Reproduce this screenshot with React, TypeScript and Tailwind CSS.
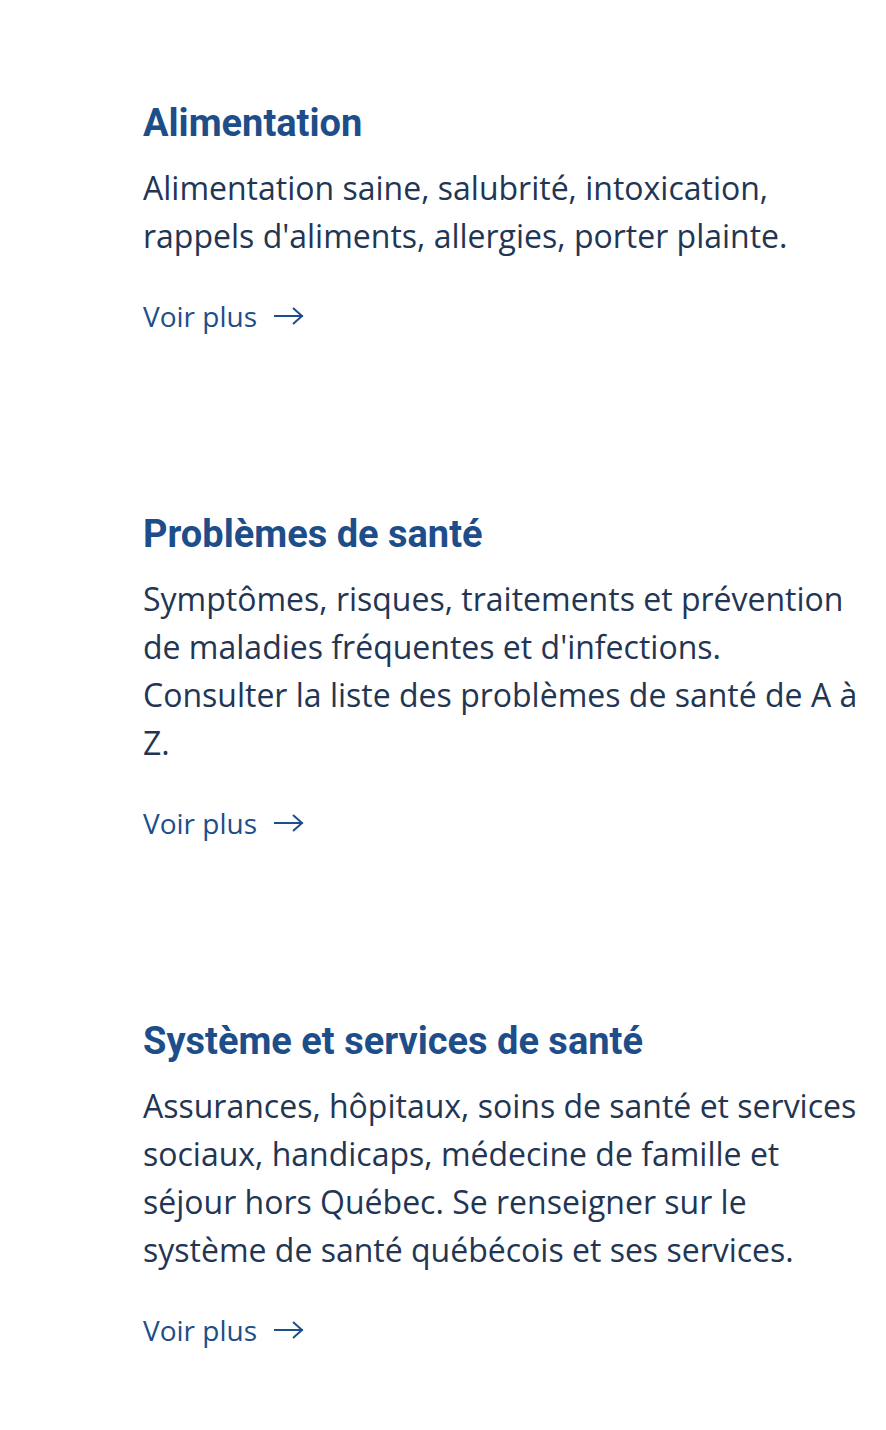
const sections = [
  {
    title: 'Alimentation',
    text: "Alimentation saine, salubrité, intoxication, rappels d'aliments, allergies, porter plainte.",
  },
  {
    title: 'Problèmes de santé',
    text: "Symptômes, risques, traitements et prévention de maladies fréquentes et d'infections. Consulter la liste des problèmes de santé de A à Z.",
  },
  {
    title: 'Système et services de santé',
    text: 'Assurances, hôpitaux, soins de santé et services sociaux, handicaps, médecine de famille et séjour hors Québec. Se renseigner sur le système de santé québécois et ses services.',
  },
];

function Arrow() {
  return (
    <svg width="32" height="20" viewBox="0 0 32 20" fill="none" className="ml-4">
      <path d="M1 10h29M20 2l9 8-9 8" stroke="#1f4f8a" strokeWidth="2" />
    </svg>
  );
}

export default function App() {
  return (
    <div className="min-h-[1430px] w-[886px] bg-white pl-[143px] pr-[20px] pt-[100px] [font-family:'Open_Sans',sans-serif]">
      <div className="flex flex-col gap-[177px]">
        {sections.map((s) => (
          <section key={s.title} className="flex flex-col">
            <h2 className="text-[38px] leading-[46px] font-bold text-[#1d4e8a] [font-family:Roboto,sans-serif]">
              {s.title}
            </h2>
            <p className="mt-[18px] text-[32px] leading-[48px] text-[#223654]">
              {s.text}
            </p>
            <a href="#" className="mt-[38px] flex items-center text-[28px] leading-[36px] text-[#1d4e8a]">
              Voir plus
              <Arrow />
            </a>
          </section>
        ))}
      </div>
    </div>
  );
}
